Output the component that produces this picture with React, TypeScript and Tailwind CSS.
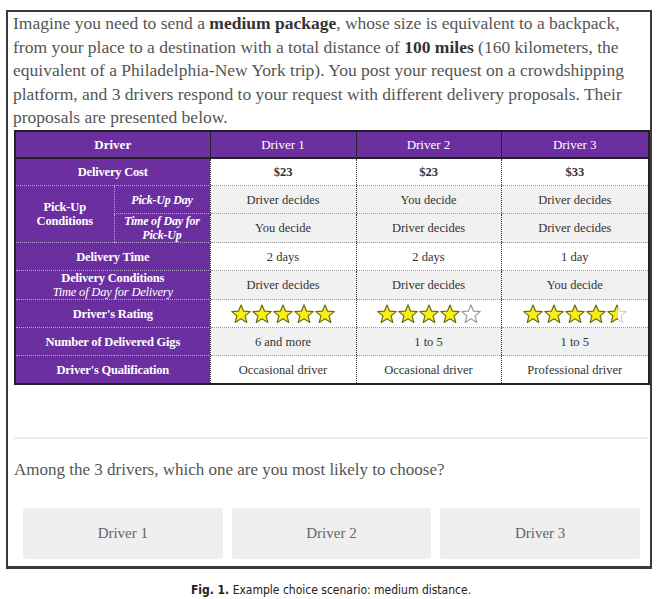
import React from "react";

const serif = { fontFamily: '"Liberation Serif", "DejaVu Serif", serif' };

function Star({ fill }: { fill: "full" | "empty" | "half" }) {
  const pts = "10,1 12.6,7.2 19.2,7.6 14.1,11.9 15.8,18.4 10,14.8 4.2,18.4 5.9,11.9 0.8,7.6 7.4,7.2";
  const id = React.useId();
  return (
    <svg width="20" height="20" viewBox="0 0 20 20" className="block">
      {fill === "half" && (
        <defs>
          <linearGradient id={id} x1="0" x2="1" y1="0" y2="0">
            <stop offset="58%" stopColor="#f5ef16" />
            <stop offset="58%" stopColor="#ffffff" />
          </linearGradient>
          <linearGradient id={id + "s"} x1="0" x2="1" y1="0" y2="0">
            <stop offset="58%" stopColor="#6b6a1a" />
            <stop offset="58%" stopColor="#d0d0d0" />
          </linearGradient>
        </defs>
      )}
      <polygon
        points={pts}
        fill={fill === "full" ? "#f5ef16" : fill === "half" ? `url(#${id})` : "#ffffff"}
        stroke={fill === "empty" ? "#9a9a9a" : fill === "half" ? `url(#${id}s)` : "#6b6a1a"}
        strokeWidth="1.2"
        strokeLinejoin="round"
      />
    </svg>
  );
}

function Stars({ n }: { n: number }) {
  const arr = [0, 1, 2, 3, 4].map((i) => (n >= i + 1 ? "full" : n > i ? "half" : "empty")) as ("full" | "empty" | "half")[];
  return (
    <div className="flex items-center justify-center gap-[1px]">
      {arr.map((f, i) => (
        <Star key={i} fill={f} />
      ))}
    </div>
  );
}

const lbl = "bg-[#6b2fa0] text-white font-bold text-center border-b border-dotted border-b-[#b9a3cf] px-1 leading-[14px] tracking-[-0.2px]";
const dat = "text-center text-[#333] border-l border-l-[#333] border-b border-dotted border-b-[#9a9a9a] leading-[14px]";

export default function App() {
  return (
    <div className="w-[662px] h-[599px] bg-white relative">
      <div className="ml-[6px] mt-[10px] w-[646px] h-[559px] border-2 border-[#3a3a3a] border-b-[3px] flex flex-col">
        <p
          className="text-[17.5px] leading-[23.6px] text-[#555] pl-[5px] tracking-[0px]"
          style={serif}
        >
          Imagine you need to send a <b className="text-[#333]">medium package</b>, whose size is equivalent to a backpack,
          <br />
          from your place to a destination with a total distance of <b className="text-[#333]">100 miles</b> (160 kilometers, the
          <br />
          equivalent of a Philadelphia-New York trip). You post your request on a crowdshipping
          <br />
          platform, and 3 drivers respond to your request with different delivery proposals. Their
          <br />
          proposals are presented below.
        </p>
        <table
          className="ml-[6px] w-[634px] border-collapse table-fixed text-[12.5px] border-2 border-[#222]"
          style={serif}
        >
          <colgroup>
            <col className="w-[99px]" />
            <col className="w-[96px]" />
            <col className="w-[146px]" />
            <col className="w-[145px]" />
            <col className="w-[148px]" />
          </colgroup>
          <tbody>
            <tr className="h-[27px] bg-[#6b2fa0] text-white border-b-2 border-[#222] text-[13px]">
              <td colSpan={2} className="text-center font-bold">Driver</td>
              <td className="text-center border-l border-[#222]">Driver 1</td>
              <td className="text-center border-l border-[#222]">Driver 2</td>
              <td className="text-center border-l border-[#222]">Driver 3</td>
            </tr>
            <tr className="h-[28px]">
              <td colSpan={2} className={lbl}>Delivery Cost</td>
              <td className={dat + " bg-white font-bold"}>$23</td>
              <td className={dat + " bg-white font-bold"}>$23</td>
              <td className={dat + " bg-white font-bold"}>$33</td>
            </tr>
            <tr className="h-[28px]">
              <td rowSpan={2} className={lbl}>
                Pick-Up
                <br />
                Conditions
              </td>
              <td className={lbl + " italic text-[12px] border-l border-dotted border-l-[#b9a3cf]"}>Pick-Up Day</td>
              <td className={dat + " bg-[#f1f1f1]"}>Driver decides</td>
              <td className={dat + " bg-[#f1f1f1]"}>You decide</td>
              <td className={dat + " bg-[#f1f1f1]"}>Driver decides</td>
            </tr>
            <tr className="h-[29px]">
              <td className={lbl + " italic text-[12px] leading-[13px] border-l border-dotted border-l-[#b9a3cf]"}>
                Time of Day for
                <br />
                Pick-Up
              </td>
              <td className={dat + " bg-[#f1f1f1]"}>You decide</td>
              <td className={dat + " bg-[#f1f1f1]"}>Driver decides</td>
              <td className={dat + " bg-[#f1f1f1]"}>Driver decides</td>
            </tr>
            <tr className="h-[28px]">
              <td colSpan={2} className={lbl}>Delivery Time</td>
              <td className={dat + " bg-white"}>2 days</td>
              <td className={dat + " bg-white"}>2 days</td>
              <td className={dat + " bg-white"}>1 day</td>
            </tr>
            <tr className="h-[29px]">
              <td colSpan={2} className={lbl}>
                Delivery Conditions
                <br />
                <span className="italic font-normal">Time of Day for Delivery</span>
              </td>
              <td className={dat + " bg-[#f1f1f1]"}>Driver decides</td>
              <td className={dat + " bg-[#f1f1f1]"}>Driver decides</td>
              <td className={dat + " bg-[#f1f1f1]"}>You decide</td>
            </tr>
            <tr className="h-[28px]">
              <td colSpan={2} className={lbl}>Driver's Rating</td>
              <td className={dat + " bg-white"}><Stars n={5} /></td>
              <td className={dat + " bg-white"}><Stars n={4} /></td>
              <td className={dat + " bg-white"}><Stars n={4.5} /></td>
            </tr>
            <tr className="h-[28px]">
              <td colSpan={2} className={lbl}>Number of Delivered Gigs</td>
              <td className={dat + " bg-[#f1f1f1]"}>6 and more</td>
              <td className={dat + " bg-[#f1f1f1]"}>1 to 5</td>
              <td className={dat + " bg-[#f1f1f1]"}>1 to 5</td>
            </tr>
            <tr className="h-[28px]">
              <td colSpan={2} className={lbl + " border-b-0"}>Driver's Qualification</td>
              <td className={dat + " bg-white border-b-0"}>Occasional driver</td>
              <td className={dat + " bg-white border-b-0"}>Occasional driver</td>
              <td className={dat + " bg-white border-b-0"}>Professional driver</td>
            </tr>
          </tbody>
        </table>
        <div className="ml-[6px] mr-[2px] mt-[52px] h-[2px] bg-[#ececec]" />
        <p className="mt-[19px] pl-[6px] text-[17px] leading-[24px] text-[#555]" style={serif}>
          Among the 3 drivers, which one are you most likely to choose?
        </p>
        <div className="mt-[26px] ml-[15px] mr-[10px] grid grid-cols-3 gap-[9px]">
          {["Driver 1", "Driver 2", "Driver 3"].map((d) => (
            <div
              key={d}
              className="h-[51px] rounded-[3px] bg-[#efefef] flex items-center justify-center text-[15px] text-[#666]"
              style={serif}
            >
              {d}
            </div>
          ))}
        </div>
      </div>
      <div
        className="mt-[13px] text-center text-[12px] leading-[16px] text-[#222]"
        style={{ fontFamily: '"DejaVu Sans Condensed", "DejaVu Sans", sans-serif' }}
      >
        <b>Fig. 1.</b> Example choice scenario: medium distance.
      </div>
    </div>
  );
}
